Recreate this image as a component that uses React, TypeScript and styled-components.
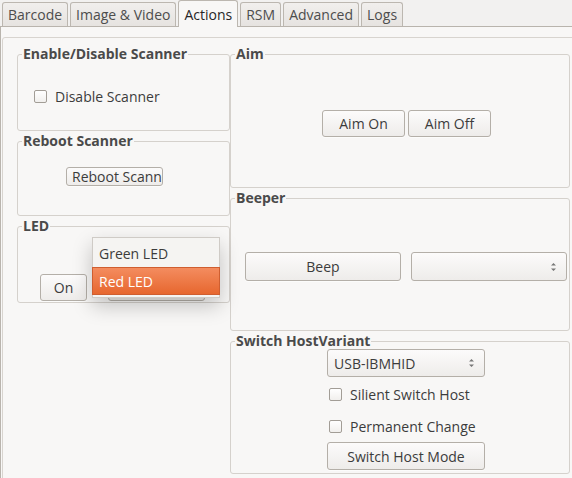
import styled, { createGlobalStyle } from "styled-components";

const GlobalStyle = createGlobalStyle`
  html, body {
    margin: 0;
    padding: 0;
    overflow: hidden;
    background: #f2f1f0;
  }
  body {
    font-family: "Open Sans", "Noto Sans", sans-serif;
    font-size: 14px;
    color: #3c3c3c;
  }
`;

const Window = styled.div`
  width: 572px;
  height: 478px;
  overflow: hidden;
  background: #f2f1f0;
`;

const TabBar = styled.div`
  display: flex;
  align-items: flex-end;
  gap: 2px;
  height: 26px;
  padding-left: 2px;
  position: relative;
  z-index: 1;
`;

const Tab = styled.div<{ $active?: boolean }>`
  box-sizing: border-box;
  height: ${(p) => (p.$active ? 27 : 24)}px;
  margin-bottom: ${(p) => (p.$active ? -1 : 0)}px;
  padding: 0 5px;
  display: flex;
  align-items: center;
  border: 1px solid #bcb7b0;
  border-bottom: none;
  border-radius: 3px 3px 0 0;
  background: ${(p) =>
    p.$active ? "#f8f7f6" : "linear-gradient(#f1efed, #e6e3e0)"};
  color: ${(p) => (p.$active ? "#262626" : "#4d4d4d")};
  white-space: nowrap;
`;

const Pane = styled.div`
  box-sizing: border-box;
  width: 584px;
  height: 470px;
  border: 1px solid #b9b4ad;
  background: #f8f7f6;
`;

const Frame = styled.div`
  box-sizing: border-box;
  margin: 10px 0 0 1px;
  height: 460px;
  border: 1px solid #d8d4cf;
  border-radius: 3px;
  padding: 8px 0 0 14px;
  display: flex;
`;

const Column = styled.div<{ $w: number }>`
  width: ${(p) => p.$w}px;
  display: flex;
  flex-direction: column;
  gap: 2px;
`;

const GroupBox = styled.fieldset<{ $h: number }>`
  box-sizing: border-box;
  margin: 0;
  padding: 0;
  min-width: 0;
  height: ${(p) => p.$h}px;
  border: 1px solid #d5d1cc;
  border-radius: 3px;
`;

const Legend = styled.legend`
  margin-left: 4px;
  padding: 0 1px;
  font-weight: 700;
  font-size: 14px;
  line-height: 16px;
  color: #4a4a4a;
`;

const Content = styled.div<{ $top: number; $left: number }>`
  position: relative;
  padding: ${(p) => p.$top}px 0 0 ${(p) => p.$left}px;
`;

const Row = styled.div<{ $gap: number }>`
  display: flex;
  align-items: center;
  gap: ${(p) => p.$gap}px;
`;

const Stack = styled.div`
  width: 158px;
  display: flex;
  flex-direction: column;
  align-items: flex-start;
`;

const Check = styled.label<{ $mt?: number }>`
  display: flex;
  align-items: center;
  gap: 8px;
  height: 16px;
  margin-top: ${(p) => p.$mt ?? 0}px;
  margin-left: ${(p) => (p.$mt ? 2 : 0)}px;
  white-space: nowrap;
`;

const Box = styled.span`
  box-sizing: border-box;
  width: 13px;
  height: 13px;
  border: 1px solid #a29d96;
  border-radius: 2px;
  background: linear-gradient(#ffffff, #f1efed);
`;

const Button = styled.button<{ $w: number; $h?: number; $mt?: number }>`
  box-sizing: border-box;
  width: ${(p) => p.$w}px;
  height: ${(p) => p.$h ?? 28}px;
  margin-top: ${(p) => p.$mt ?? 0}px;
  padding: 0;
  font: inherit;
  color: #3c3c3c;
  border: 1px solid #b4afa8;
  border-radius: 3px;
  background: linear-gradient(#fcfbfb, #eeecea);
  box-shadow: 0 1px 0 rgba(255, 255, 255, 0.6);
  white-space: nowrap;
  overflow: hidden;
`;

const ClippedButton = styled(Button)`
  text-align: left;
  padding-left: 5px;
  line-height: 17px;
`;

const Combo = styled.div<{ $w: number; $h?: number }>`
  box-sizing: border-box;
  width: ${(p) => p.$w}px;
  height: ${(p) => p.$h ?? 28}px;
  display: flex;
  align-items: center;
  justify-content: space-between;
  padding: 0 9px 0 6px;
  border: 1px solid #b4afa8;
  border-radius: 3px;
  background: linear-gradient(#fcfbfb, #eeecea);
  color: #3c3c3c;
`;

const Popup = styled.div`
  position: absolute;
  top: 3px;
  left: 74px;
  width: 128px;
  box-sizing: border-box;
  padding: 1px 0 2px;
  border: 1px solid #cfcbc6;
  background: #f5f4f2;
  box-shadow: 0 8px 20px rgba(0, 0, 0, 0.22);
  z-index: 2;
`;

const Item = styled.div<{ $hl?: boolean }>`
  box-sizing: border-box;
  height: 28px;
  display: flex;
  align-items: center;
  padding-left: 6px;
  margin: ${(p) => (p.$hl ? "0 -1px" : "0")};
  color: ${(p) => (p.$hl ? "#ffffff" : "#3c3c3c")};
  background: ${(p) =>
    p.$hl ? "linear-gradient(#f48c5f, #e7672f)" : "transparent"};
  border: ${(p) => (p.$hl ? "1px solid #cf5e30" : "none")};
`;

const Arrows = () => (
  <svg width="7" height="12" viewBox="0 0 7 12">
    <path d="M1 4.5 L3.5 2 L6 4.5 Z M1 7.5 L3.5 10 L6 7.5 Z" fill="#777" />
  </svg>
);

const tabs = ["Barcode", "Image & Video", "Actions", "RSM", "Advanced", "Logs"];

export default function App() {
  return (
    <Window>
      <GlobalStyle />
      <TabBar>
        {tabs.map((t) => (
          <Tab key={t} $active={t === "Actions"}>
            {t}
          </Tab>
        ))}
      </TabBar>
      <Pane>
        <Frame>
          <Column $w={213}>
            <GroupBox $h={85}>
              <Legend>Enable/Disable Scanner</Legend>
              <Content $top={26} $left={16}>
                <Check>
                  <Box />
                  Disable Scanner
                </Check>
              </Content>
            </GroupBox>
            <GroupBox $h={83}>
              <Legend>Reboot Scanner</Legend>
              <Content $top={18} $left={48}>
                <ClippedButton $w={97} $h={19}>
                  Reboot Scanner
                </ClippedButton>
              </Content>
            </GroupBox>
            <GroupBox $h={85}>
              <Legend>LED</Legend>
              <Content $top={40} $left={22}>
                <Row $gap={21}>
                  <Button $w={47} $h={27}>
                    On
                  </Button>
                  <Combo $w={97} $h={27} />
                </Row>
                <Popup>
                  <Item>Green LED</Item>
                  <Item $hl>Red LED</Item>
                </Popup>
              </Content>
            </GroupBox>
          </Column>
          <Column $w={340}>
            <GroupBox $h={142}>
              <Legend>Aim</Legend>
              <Content $top={48} $left={91}>
                <Row $gap={3}>
                  <Button $w={83} $h={27}>
                    Aim On
                  </Button>
                  <Button $w={83} $h={27}>
                    Aim Off
                  </Button>
                </Row>
              </Content>
            </GroupBox>
            <GroupBox $h={141}>
              <Legend>Beeper</Legend>
              <Content $top={46} $left={14}>
                <Row $gap={10}>
                  <Button $w={156} $h={29}>
                    Beep
                  </Button>
                  <Combo $w={156} $h={29}>
                    <span />
                    <Arrows />
                  </Combo>
                </Row>
              </Content>
            </GroupBox>
            <GroupBox $h={141}>
              <Legend>Switch HostVariant</Legend>
              <Content $top={0} $left={96}>
                <Stack>
                  <Combo $w={158}>
                    <span>USB-IBMHID</span>
                    <Arrows />
                  </Combo>
                  <Check $mt={9}>
                    <Box />
                    Silient Switch Host
                  </Check>
                  <Check $mt={16}>
                    <Box />
                    Permanent Change
                  </Check>
                  <Button $w={158} $mt={8}>
                    Switch Host Mode
                  </Button>
                </Stack>
              </Content>
            </GroupBox>
          </Column>
        </Frame>
      </Pane>
    </Window>
  );
}
